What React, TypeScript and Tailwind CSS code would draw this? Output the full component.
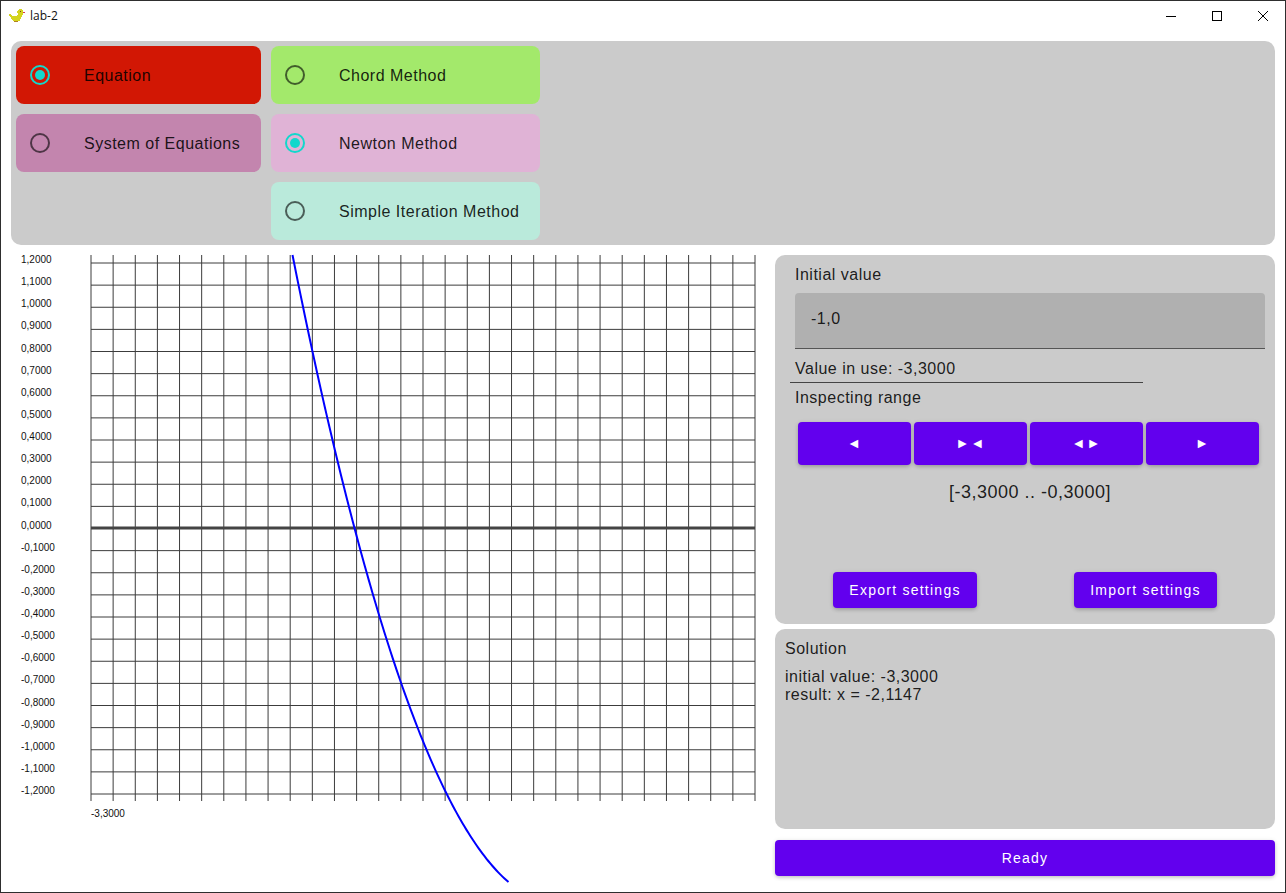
import React from 'react';

const font = { fontFamily: '"Liberation Sans", Arial, sans-serif' };

// chart geometry, taken from the plot in the app
const left = 91;
const right = 755;
const top = 263;
const stepX = 664 / 30;
const stepY = 531 / 24;

// the plotted function, in screen pixels
const curvePoints = () => {
  const pts: string[] = [];
  for (let u = 0; u <= 216; u += 2) {
    const y = 255 + u * (5.035 - 0.01028 * u + 0.0000019 * u * u);
    pts.push(`${292.5 + u},${y}`);
  }
  return pts.join(' ');
};

const labelFor = (i: number) => {
  const v = 12 - i;
  if (v === 0) return '0,0000';
  const abs = Math.abs(v);
  return `${v < 0 ? '-' : ''}${Math.floor(abs / 10)},${abs % 10}000`;
};

const Chart = () => (
  <svg width={775} height={633} viewBox="0 250 775 633" className="block shrink-0" style={font}>
    {Array.from({ length: 31 }, (_, i) => (
      <line key={i} x1={left + stepX * i} x2={left + stepX * i} y1={255} y2={801} stroke="#3c3c3c" strokeWidth={1} />
    ))}
    {Array.from({ length: 25 }, (_, i) => (
      <g key={i}>
        <line x1={left} x2={right} y1={top + stepY * i} y2={top + stepY * i} stroke="#3c3c3c" strokeWidth={1} />
        <text x={21} y={top + stepY * i} fontSize={10} fill="#111">{labelFor(i)}</text>
      </g>
    ))}
    <line x1={left} x2={right} y1={528} y2={528} stroke="#444" strokeWidth={3} />
    <text x={91} y={817} fontSize={10} fill="#111">-3,3000</text>
    <polyline points={curvePoints()} fill="none" stroke="#0000ff" strokeWidth={2} />
  </svg>
);

const Duck = () => (
  <svg width={16} height={14} viewBox="0 0 16 14" shapeRendering="crispEdges" className="shrink-0">
    <path d="M10 0h3v1h1v5h-1v2h-1v2h-1v2H4v-1H3v-1H2V8H1V7H0V5h2v1h1v1h5V6h1V4H8V2h1V1h1z" fill="#d4d41e" />
    <path d="M14 3h2v1h-2z" fill="#d8324a" />
    <path d="M11 2h1v1h-1z" fill="#7a3a20" />
    <path d="M5 12h4v1H5z" fill="#b08020" />
  </svg>
);

const TitleBar = () => (
  <div className="flex h-[30px] items-center bg-white pl-2">
    <Duck />
    <span className="ml-[5px] text-[12px] text-[#111]" style={{ fontFamily: '"Open Sans", sans-serif' }}>lab-2</span>
    <div className="ml-auto flex items-center">
      <div className="flex w-[46px] justify-center">
        <svg width={10} height={10} viewBox="0 0 10 10" shapeRendering="crispEdges"><path d="M0 5h10v1H0z" fill="#000" /></svg>
      </div>
      <div className="flex w-[46px] justify-center">
        <svg width={10} height={10} viewBox="0 0 10 10" shapeRendering="crispEdges"><path d="M.5.5h9v9h-9z" fill="none" stroke="#000" /></svg>
      </div>
      <div className="flex w-[45px] justify-center">
        <svg width={10} height={10} viewBox="0 0 10 10"><path d="M0 0l10 10M10 0L0 10" fill="none" stroke="#000" strokeWidth={1} /></svg>
      </div>
    </div>
  </div>
);

const RadioCard = ({ label, color, checked, width }: { label: string; color: string; checked?: boolean; width: string }) => (
  <div className={`flex h-[58px] items-center rounded-[8px] pl-[14px] ${color} ${width}`}>
    <span className={`flex h-5 w-5 shrink-0 items-center justify-center rounded-full border-2 ${checked ? 'border-[#12d8cc]' : 'border-black/60'}`}>
      {checked && <span className="h-[10px] w-[10px] rounded-full bg-[#12d8cc]" />}
    </span>
    <span className="ml-[34px] mt-[2px] whitespace-nowrap text-[16px] tracking-[0.5px] text-black/87">{label}</span>
  </div>
);

const PurpleButton = ({ children, className }: { children: React.ReactNode; className: string }) => (
  <button className={`flex items-center justify-center rounded-[4px] bg-[#6200ee] text-[14px] tracking-[1.25px] text-white shadow-[0_2px_4px_-1px_rgba(0,0,0,0.2),0_1px_5px_0_rgba(0,0,0,0.12)] ${className}`}>
    {children}
  </button>
);

export default function App() {
  return (
    <div className="flex h-[893px] w-[1286px] flex-col overflow-hidden border border-[#2e2e2e] bg-white" style={font}>
      <TitleBar />
      <div className="flex flex-col px-[10px] pt-[10px]">
        <div className="flex h-[204px] gap-[10px] rounded-[10px] bg-[#cbcbcb] p-[5px]">
          <div className="flex flex-col gap-[10px]">
            <RadioCard label="Equation" color="bg-[#d21704]" width="w-[245px]" checked />
            <RadioCard label="System of Equations" color="bg-[#c385ae]" width="w-[245px]" />
          </div>
          <div className="flex flex-col gap-[10px]">
            <RadioCard label="Chord Method" color="bg-[#a3e96b]" width="w-[269px]" />
            <RadioCard label="Newton Method" color="bg-[#e0b3d6]" width="w-[269px]" checked />
            <RadioCard label="Simple Iteration Method" color="bg-[#baeadb]" width="w-[269px]" />
          </div>
        </div>
      </div>
      <div className="flex">
        <div className="-ml-px pt-[5px]"><Chart /></div>
        <div className="flex w-[500px] flex-col pt-[10px] text-black/87 tracking-[0.5px]">
          <div className="flex h-[369px] flex-col rounded-[10px] bg-[#cbcbcb]">
            <div className="pl-5 pt-[10px] text-[16px] leading-[19px]">Initial value</div>
            <div className="ml-5 mr-[10px] mt-[9px] flex h-[56px] items-start rounded-t-[4px] border-b border-[#555] bg-[#b0b0b0] pl-4 pt-[16px] text-[16px] leading-[19px]">-1,0</div>
            <div className="pl-5 pt-[10px] text-[16px] leading-[19px]">Value in use: -3,3000</div>
            <div className="ml-[15px] mt-[4px] h-px w-[353px] bg-[#444]" />
            <div className="pl-5 pt-[5px] text-[16px] leading-[19px]">Inspecting range</div>
            <div className="ml-[23px] mt-[15px] flex gap-[3px]">
              <PurpleButton className="h-[43px] w-[113px]">◄</PurpleButton>
              <PurpleButton className="h-[43px] w-[113px]">►◄</PurpleButton>
              <PurpleButton className="h-[43px] w-[113px]">◄►</PurpleButton>
              <PurpleButton className="h-[43px] w-[113px]">►</PurpleButton>
            </div>
            <div className="mt-[17px] pl-[10px] text-center text-[18px] leading-[21px]">[-3,3000 .. -0,3000]</div>
            <div className="ml-[58px] mt-[69px] flex">
              <PurpleButton className="h-[36px] w-[144px]">Export settings</PurpleButton>
              <PurpleButton className="ml-[97px] h-[36px] w-[143px]">Import settings</PurpleButton>
            </div>
          </div>
          <div className="mt-[5px] h-[200px] rounded-[10px] bg-[#cbcbcb] pl-[10px] pt-[10px] text-[16px]">
            <div className="leading-[19px]">Solution</div>
            <div className="mt-[10px] leading-[18px]">initial value: -3,3000</div>
            <div className="leading-[18px]">result: x = -2,1147</div>
          </div>
          <PurpleButton className="mt-[11px] h-[36px] w-[500px]">Ready</PurpleButton>
        </div>
      </div>
    </div>
  );
}
